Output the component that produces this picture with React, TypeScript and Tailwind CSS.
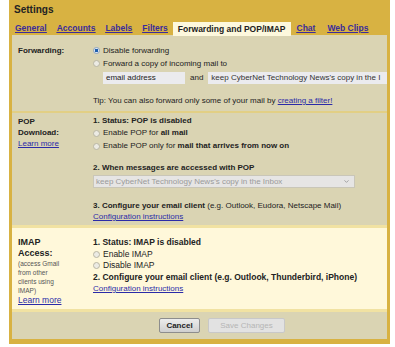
import { ChevronDown } from "lucide-react";

type RadioProps = { label: React.ReactNode; checked?: boolean };

const Radio = ({ label, checked }: RadioProps) => (
  <div className="flex items-center gap-[3px]">
    <span
      className={
        checked
          ? "h-[7px] w-[7px] rounded-full border border-[#8fa6c4] bg-[radial-gradient(circle,#1f5fae_45%,#dfe6ee_55%)]"
          : "h-[7px] w-[7px] rounded-full border border-[#b9b6a4] bg-[#ecebe4]"
      }
    />
    <span>{label}</span>
  </div>
);

const Link = ({ children }: { children: React.ReactNode }) => (
  <a className="text-[#2b2ba8] underline">{children}</a>
);

export default function App() {
  return (
    <div className="h-[347px] w-[395px] overflow-hidden bg-white pl-[9px] pr-[5px] font-['Liberation_Sans',Arial,sans-serif] text-[#222]">
      <div className="overflow-hidden border-x-[3px] border-b-[5px] border-[#d8b242] bg-[#d8b242]">
        {/* header */}
        <div className="h-[35px]">
          <div className="pl-[2px] pt-[4px] text-[10px] font-bold leading-[12px]">Settings</div>
          <div className="mt-[6px] flex items-end text-[8.5px] font-bold leading-[13px]">
            <div className="flex gap-[10px] pl-[3px] pr-[5px] pb-px text-[#3a2c9c] underline">
              <a>General</a>
              <a>Accounts</a>
              <a>Labels</a>
              <a>Filters</a>
            </div>
            <div className="bg-[#fdf8dd] px-[5px] pt-px text-[#222]">Forwarding and POP/IMAP</div>
            <div className="flex gap-[12px] pl-[6px] pb-px text-[#3a2c9c] underline">
              <a>Chat</a>
              <a>Web Clips</a>
            </div>
          </div>
        </div>

        {/* forwarding */}
        <div className="flex border-b-2 border-[#e2cf85] bg-[#dad4b3] pb-[4px] pt-[9px] text-[8px] leading-[13px]">
          <div className="w-[78px] shrink-0 pl-[6px] font-bold">Forwarding:</div>
          <div className="min-w-0 flex-1 pl-[3px]">
            <Radio checked label="Disable forwarding" />
            <Radio label="Forward a copy of incoming mail to" />
            <div className="mt-px flex items-center gap-[5px] whitespace-nowrap pl-[10px]">
              <div className="h-[12px] w-[82px] shrink-0 bg-[#ebebee] pl-[3px] leading-[12px]">email address</div>
              <span>and</span>
              <div className="h-[12px] w-[180px] shrink-0 overflow-hidden bg-[#ebebee] pl-[3px] leading-[12px] text-[#333]">
                keep CyberNet Technology News's copy in the I
              </div>
            </div>
            <div className="mt-[11px] leading-[12px]">
              Tip: You can also forward only some of your mail by <Link>creating a filter!</Link>
            </div>
          </div>
        </div>

        {/* pop */}
        <div className="flex bg-[#dad4b3] pb-[3px] pt-[2px] text-[8px] leading-[12px]">
          <div className="w-[78px] shrink-0 pl-[6px] pt-px leading-[11px]">
            <div className="font-bold">POP</div>
            <div className="font-bold">Download:</div>
            <Link>Learn more</Link>
          </div>
          <div className="min-w-0 flex-1 pl-[3px]">
            <div className="font-bold">1. Status: POP is disabled</div>
            <Radio label={<>Enable POP for <b>all mail</b></>} />
            <div className="mt-px">
              <Radio label={<>Enable POP only for <b>mail that arrives from now on</b></>} />
            </div>
            <div className="mt-[10px] font-bold">2. When messages are accessed with POP</div>
            <div className="mt-px flex h-[13px] w-[262px] items-center justify-between border border-[#c9c6b8] bg-[#e6e5e4] pl-[2px] pr-[4px] text-[#9a9a9a]">
              <span>keep CyberNet Technology News's copy in the Inbox</span>
              <ChevronDown size={7} strokeWidth={3} />
            </div>
            <div className="mt-[12px] font-bold">
              3. Configure your email client <span className="font-normal">(e.g. Outlook, Eudora, Netscape Mail)</span>
            </div>
            <div className="leading-[10px]">
              <Link>Configuration instructions</Link>
            </div>
          </div>
        </div>

        {/* imap */}
        <div className="flex border-y-[3px] border-[#f1e2a2] bg-[#fff8da] pb-[3px] pt-[9px]">
          <div className="w-[78px] shrink-0 pl-[6px]">
            <div className="text-[9px] font-bold leading-[11px]">IMAP</div>
            <div className="text-[9px] font-bold leading-[11px]">Access:</div>
            <div className="text-[6.5px] leading-[9px] text-[#555]">
              (access Gmail
              <br />
              from other
              <br />
              clients using
              <br />
              IMAP)
            </div>
            <div className="text-[8.5px] leading-[11px]">
              <Link>Learn more</Link>
            </div>
          </div>
          <div className="min-w-0 flex-1 pl-[3px] text-[8.5px] leading-[11.5px]">
            <div className="font-bold">1. Status: IMAP is disabled</div>
            <Radio label="Enable IMAP" />
            <Radio label="Disable IMAP" />
            <div className="font-bold">2. Configure your email client (e.g. Outlook, Thunderbird, iPhone)</div>
            <div className="text-[8px]">
              <Link>Configuration instructions</Link>
            </div>
          </div>
        </div>

        {/* buttons */}
        <div className="flex h-[27px] items-center justify-center gap-[8px] bg-[#dad4b3] pl-[45px] text-[8px]">
          <button className="h-[15px] w-[41px] rounded-[2px] border border-[#8d8d8d] bg-[linear-gradient(#ececec,#cfcfcf)] font-bold">
            Cancel
          </button>
          <button className="h-[15px] w-[77px] rounded-[2px] border border-[#c8c8c8] bg-[#e2e2e2] text-[#b5b5b5]">
            Save Changes
          </button>
        </div>
      </div>
    </div>
  );
}
